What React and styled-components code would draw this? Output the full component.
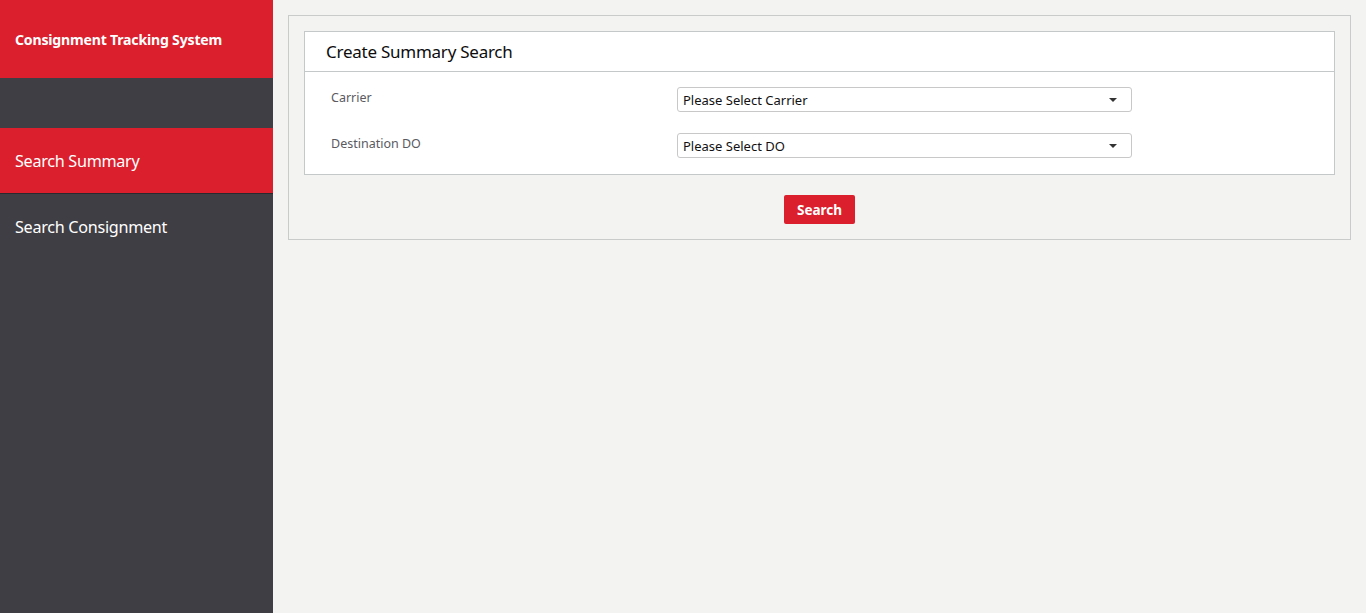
import React from "react";
import styled, { createGlobalStyle } from "styled-components";

const Global = createGlobalStyle`
  html, body { margin: 0; padding: 0; height: 100%; }
  body { font-family: "Noto Sans", "Open Sans", sans-serif; background: #f3f3f2; }
  #root { height: 100%; }
`;

const Layout = styled.div`
  display: flex;
  height: 613px;
`;

const Sidebar = styled.aside`
  width: 273px;
  flex: none;
  background: #3f3e44;
  display: flex;
  flex-direction: column;
`;

const Brand = styled.div`
  height: 78px;
  background: #db1f2d;
  color: #fff;
  font-size: 14.1px;
  font-weight: 700;
  display: flex;
  align-items: center;
  padding: 0 15px;
  box-sizing: border-box;
  letter-spacing: -0.2px;
`;

const Nav = styled.nav`
  margin-top: 50px;
  display: flex;
  flex-direction: column;
`;

const NavItem = styled.a`
  height: 65px;
  display: flex;
  align-items: center;
  padding: 0 15px;
  color: #fff;
  font-size: 16.2px;
  background: ${(p) => (p.$active ? "#db1f2d" : "transparent")};
  border-bottom: 1px solid ${(p) => (p.$active ? "#2a292d" : "transparent")};
  text-decoration: none;
  letter-spacing: -0.3px;
`;

const Main = styled.main`
  flex: 1;
  padding: 15px 15px 0 15px;
`;

const Outer = styled.div`
  border: 1px solid #c9cbcb;
  padding: 15px;
  display: flex;
  flex-direction: column;
  align-items: stretch;
`;

const Card = styled.section`
  background: #fff;
  border: 1px solid #c5c8c9;
`;

const CardHeader = styled.header`
  height: 39px;
  border-bottom: 1px solid #c5c8c9;
  display: flex;
  align-items: center;
  padding: 0 21px;
  font-size: 17px;
  color: #0d0d0d;
  letter-spacing: -0.25px;
`;

const CardBody = styled.div`
  padding: 15px 0 16px 26px;
  display: flex;
  flex-direction: column;
  gap: 21px;
`;

const FormRow = styled.div`
  display: grid;
  grid-template-columns: 346px 455px;
  align-items: start;
`;

const Label = styled.label`
  font-size: 12.5px;
  color: #5a5a5f;
  padding-top: 2px;
`;

const Select = styled.div`
  height: 25px;
  box-sizing: border-box;
  border: 1px solid #c8c8c8;
  border-radius: 3px;
  display: flex;
  align-items: center;
  justify-content: space-between;
  padding: 0 14px 0 5px;
  font-size: 13px;
  color: #111;
`;

const Caret = styled.span`
  width: 0;
  height: 0;
  border-left: 4px solid transparent;
  border-right: 4px solid transparent;
  border-top: 4px solid #333;
`;

const Actions = styled.div`
  display: flex;
  justify-content: center;
  padding-top: 20px;
`;

const Button = styled.button`
  width: 71px;
  height: 29px;
  background: #db1f2d;
  color: #fff;
  border: none;
  border-radius: 2px;
  font-family: inherit;
  font-weight: 700;
  font-size: 13.5px;
  cursor: pointer;
`;

export default function App() {
  return (
    <>
      <Global />
      <Layout>
        <Sidebar>
          <Brand>Consignment Tracking System</Brand>
          <Nav>
            <NavItem $active href="#">Search Summary</NavItem>
            <NavItem href="#">Search Consignment</NavItem>
          </Nav>
        </Sidebar>
        <Main>
          <Outer>
            <Card>
              <CardHeader>Create Summary Search</CardHeader>
              <CardBody>
                <FormRow>
                  <Label>Carrier</Label>
                  <Select>
                    <span>Please Select Carrier</span>
                    <Caret />
                  </Select>
                </FormRow>
                <FormRow>
                  <Label>Destination DO</Label>
                  <Select>
                    <span>Please Select DO</span>
                    <Caret />
                  </Select>
                </FormRow>
              </CardBody>
            </Card>
            <Actions>
              <Button>Search</Button>
            </Actions>
          </Outer>
        </Main>
      </Layout>
    </>
  );
}
